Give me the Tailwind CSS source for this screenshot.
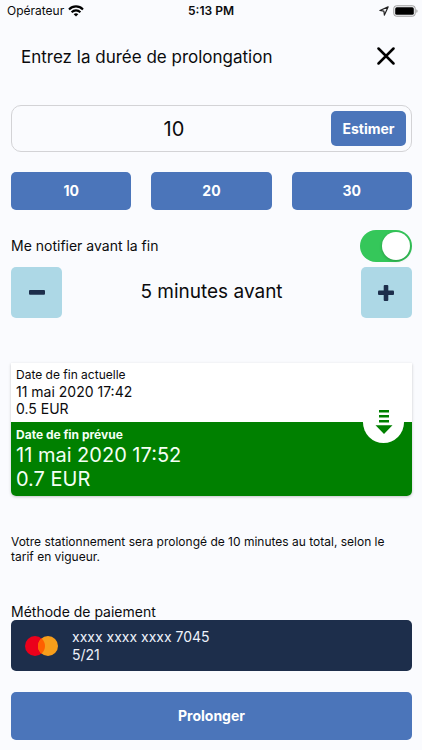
<!DOCTYPE html>
<html lang="fr">
<head>
<meta charset="utf-8">
<meta name="viewport" content="width=device-width, initial-scale=1">
<title>Prolongation</title>
<script src="https://cdn.jsdelivr.net/npm/@tailwindcss/browser@4"></script>
</head>
<body class="min-h-screen bg-[#fafbfe] font-['Inter','Liberation_Sans',sans-serif] text-[#0b0b0d]">
<div class="grid h-[22px] grid-cols-3 items-center px-[7px] text-xs">
  <div class="flex items-center gap-1">
    <span>Opérateur</span>
    <svg class="h-3 w-4" viewBox="0 0 16 12" fill="none" stroke="#000" stroke-width="2.1" aria-hidden="true"><path d="M1 4.4C5 .4 11 .4 15 4.4M3.6 7.2c2.5-2.4 6.3-2.4 8.8 0"/><path d="M5.7 9.2c1.3-1.2 3.3-1.2 4.6 0L8 11.6z" fill="#000" stroke="none"/></svg>
  </div>
  <div class="text-center font-semibold">5:13 PM</div>
  <div class="flex items-center justify-end gap-1">
    <svg class="h-[10px] w-[10px]" viewBox="0 0 10 10" fill="none" stroke="#222" stroke-width="1.2" stroke-linejoin="round" aria-hidden="true"><path d="M9.1.9.9 4.5l4 .6.5 4z"/></svg>
    <svg class="-mr-1 h-3 w-[26px]" viewBox="0 0 26 12" aria-hidden="true"><rect x=".8" y=".8" width="21.4" height="10.4" rx="2.6" fill="none" stroke="#999" /><rect x="2.2" y="2.2" width="18.6" height="7.6" rx="1.5"/><path d="M23.4 4.2c1.5.5 1.5 3.1 0 3.6z" fill="#999"/></svg>
  </div>
</div>

<main class="pr-[10px] pb-[10px] pl-[11px]">
  <header class="flex h-[72px] items-center justify-between px-[10px]">
    <h1 class="text-[17px]">Entrez la durée de prolongation</h1>
    <button type="button" aria-label="Fermer" class="-mt-1 mr-[7px]">
      <svg class="h-[18px] w-[18px]" viewBox="0 0 18 18" stroke="#000" stroke-width="2.5" stroke-linecap="round" aria-hidden="true"><path d="M1.5 1.5l15 15M16.5 1.5l-15 15"/></svg>
    </button>
  </header>

  <form>
    <div class="mt-[11px] flex h-[47px] items-center rounded-[10px] border border-[#d3d3d6] px-[5px]">
      <input type="text" inputmode="numeric" value="10" aria-label="Durée en minutes" class="min-w-0 flex-1 bg-transparent text-center text-xl outline-none">
      <button type="button" class="h-[35px] w-[75px] rounded-[5px] bg-[#4b75ba] text-sm font-bold text-white">Estimer</button>
    </div>

    <div class="mt-5 grid grid-cols-3 gap-5 text-sm font-bold text-white">
      <button type="button" class="h-[38px] rounded-[5px] bg-[#4b75ba]">10</button>
      <button type="button" class="h-[38px] rounded-[5px] bg-[#4b75ba]">20</button>
      <button type="button" class="h-[38px] rounded-[5px] bg-[#4b75ba]">30</button>
    </div>

    <div class="mt-5 flex items-center justify-between">
      <label for="notify" class="text-sm">Me notifier avant la fin</label>
      <input id="notify" type="checkbox" role="switch" checked class="flex h-8 w-[52px] appearance-none items-center rounded-full bg-[#d9d9dc] p-[2px] before:block before:size-7 before:rounded-full before:bg-white before:shadow-[0_1px_3px_rgba(0,0,0,0.25)] checked:justify-end checked:bg-[#35c75a]">
    </div>

    <div class="mt-[5px] flex items-center justify-between">
      <button type="button" aria-label="Diminuer" class="flex size-[51px] items-center justify-center rounded-[5px] bg-[#add8e6]">
        <svg class="size-4" viewBox="0 0 16 16" fill="#1d2e4b" aria-hidden="true"><rect y="5" width="16" height="4.8" rx="1"/></svg>
      </button>
      <output class="text-[19px]">5 minutes avant</output>
      <button type="button" aria-label="Augmenter" class="flex size-[51px] items-center justify-center rounded-[5px] bg-[#add8e6]">
        <svg class="size-4" viewBox="0 0 16 16" fill="#1d2e4b" aria-hidden="true"><rect y="5.4" width="16" height="4.6" rx="1"/><rect x="5.7" width="4.6" height="16" rx="1"/></svg>
      </button>
    </div>

    <section class="mt-[45px] rounded-b-[5px] bg-white shadow-[0_1px_3px_rgba(0,0,0,0.22)]">
      <div class="px-[5px] pt-1 pb-[5px] text-sm leading-[17px]">
        <p class="text-xs leading-4">Date de fin actuelle</p>
        <p>11 mai 2020 17:42</p>
        <p>0.5 EUR</p>
      </div>
      <div class="relative rounded-b-[5px] bg-[#008000] px-[5px] pt-[5px] pb-[5px] text-xl leading-6 text-[#f4fff4]">
        <p class="text-xs leading-4 font-bold">Date de fin prévue</p>
        <p>11 mai 2020 17:52</p>
        <p>0.7 EUR</p>
        <div class="absolute -top-5 right-2 flex size-[41px] items-center justify-center rounded-full bg-white">
          <svg class="mb-px h-6 w-[18px]" viewBox="0 0 18 24" fill="#008000" aria-hidden="true"><path d="M4 0h10v2.6H4zM4 5h10v2.6H4zM4 10h10v2.6H4zM.5 15.3h17L9 24z"/></svg>
        </div>
      </div>
    </section>

    <p class="mt-[38px] pr-5 text-xs leading-[15px]">Votre stationnement sera prolongé de 10 minutes au total, selon le tarif en vigueur.</p>

    <h2 class="mt-[39px] text-sm leading-[17px]">Méthode de paiement</h2>
    <button type="button" class="flex h-[51px] w-full items-center rounded-[5px] bg-[#1d2e4b] pl-[14px] text-left text-sm leading-[18px] text-[#eef2fb]">
      <svg class="mr-[14px] h-5 w-[33px]" viewBox="0 0 33 20" role="img" aria-label="Mastercard"><circle cx="10" cy="10" r="10" fill="#eb001b"/><circle cx="23" cy="10" r="10" fill="#f79e1b"/><path d="M16.5 2.4a10 10 0 0 1 0 15.2 10 10 0 0 1 0-15.2z" fill="#ff5f00"/></svg>
      <span>xxxx xxxx xxxx 7045<br>5/21</span>
    </button>

    <button type="submit" class="mt-[21px] h-12 w-full rounded-[5px] bg-[#4b75ba] text-sm font-bold text-white">Prolonger</button>
  </form>
</main>
</body>
</html>
